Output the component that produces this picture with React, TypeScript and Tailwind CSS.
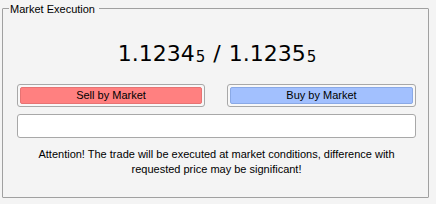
export default function App() {
  const font = { fontFamily: '"Liberation Sans", Arial, sans-serif' };
  return (
    <div className="w-[436px] h-[204px] bg-[#f4f4f4] text-black overflow-hidden pt-[1px]" style={font}>
      <fieldset className="ml-[2px] w-[427px] h-[197px] border border-[#a0a0a0] rounded-[1px] p-0 m-0">
        <legend className="ml-[6px] pl-[1px] pr-[4px] pt-[2px] text-[11px] leading-[13px]">Market Execution</legend>
        <div className="ml-[14px] w-[399px] flex flex-col">
          <div className="mt-[23px] h-[26px] flex items-end justify-center pl-[1px] leading-none" style={{ fontFamily: '"DejaVu Sans", Verdana, sans-serif' }}>
            <span className="text-[22px]">1.1234</span>
            <span className="text-[15px] ml-[1px]">5</span>
            <span className="text-[22px] mx-[8px]">/</span>
            <span className="text-[22px]">1.1235</span>
            <span className="text-[15px] ml-[1px]">5</span>
          </div>
          <div className="mt-[19px] flex gap-[22px]">
            <div className="w-[188px] h-[23px] border border-[#a8a8a8] rounded-[3px] p-[2px] bg-[#f8f8f8]">
              <div className="h-full bg-[#ff8080] border border-[#e77373] rounded-[2px] flex items-center justify-center text-[11px]">Sell by Market</div>
            </div>
            <div className="w-[189px] h-[23px] border border-[#a8a8a8] rounded-[3px] p-[2px] bg-[#f8f8f8]">
              <div className="h-full bg-[#a2c0fe] border border-[#8aa9e6] rounded-[2px] flex items-center justify-center text-[11px]">Buy by Market</div>
            </div>
          </div>
          <div className="mt-[7px] h-[24px] bg-white border border-[#a8a8a8] rounded-[3px]"></div>
          <p className="mt-[9px] text-center text-[11px] leading-[15px]">
            Attention! The trade will be executed at market conditions, difference with<br />requested price may be significant!
          </p>
        </div>
      </fieldset>
    </div>
  );
}
